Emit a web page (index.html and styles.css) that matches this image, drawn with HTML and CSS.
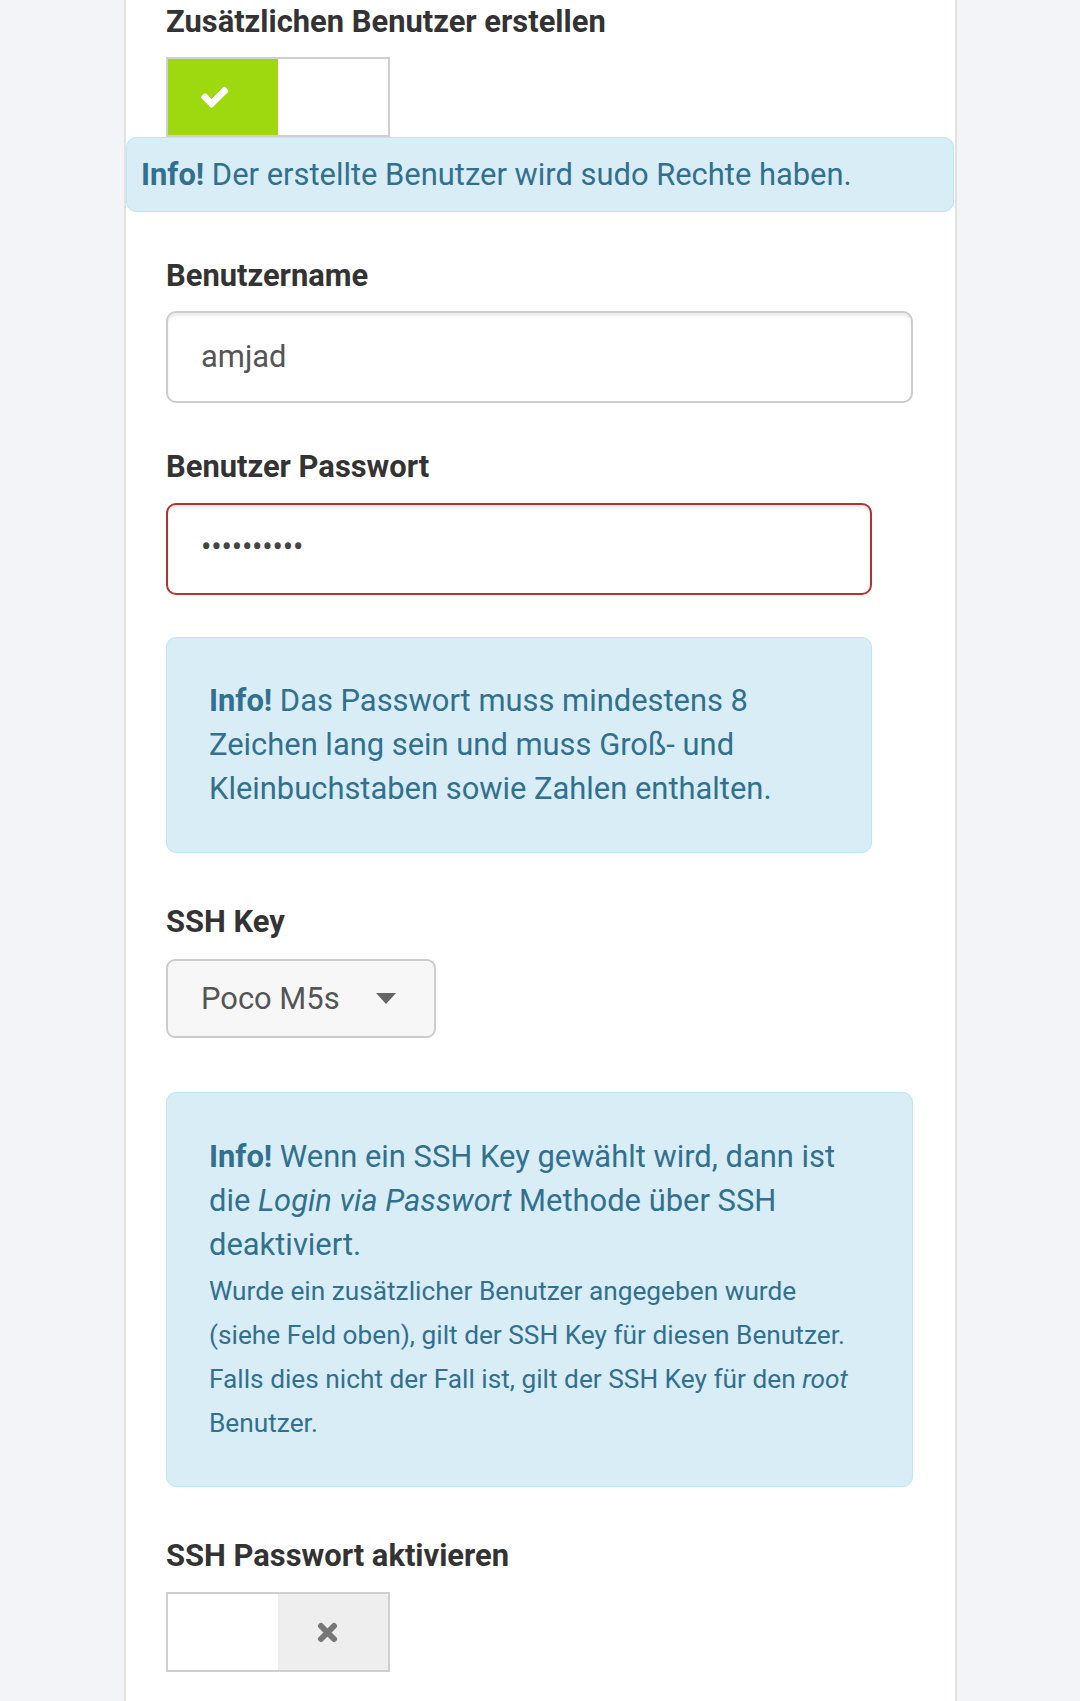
FILE: index.html
```html
<!DOCTYPE html>
<html lang="de">
<head>
<meta charset="utf-8">
<title>Benutzer</title>
<link rel="stylesheet" href="styles.css">
</head>
<body>
<div class="card">
  <div class="lbl lbl-first">Zusätzlichen Benutzer erstellen</div>
  <div class="switch switch-top">
    <div class="seg seg-on">
      <svg class="ico-check" viewBox="0 0 1792 1792" aria-hidden="true"><path fill="#fff" d="M1671 566q0 40-28 68l-724 724-136 136q-28 28-68 28t-68-28l-136-136-362-362q-28-28-28-68t28-68l136-136q28-28 68-28t68 28l294 295 656-657q28-28 68-28t68 28l136 136q28 28 28 68z"/></svg>
    </div>
    <div class="seg seg-blank"></div>
  </div>
  <div class="alert alert-wide"><strong>Info!</strong> Der erstellte Benutzer wird sudo Rechte haben.</div>

  <div class="lbl lbl-gap">Benutzername</div>
  <div class="input">amjad</div>

  <div class="lbl lbl-gap">Benutzer Passwort</div>
  <div class="input input-error input-narrow"><span class="dots">••••••••••</span></div>

  <div class="alert alert-box alert-narrow"><strong>Info!</strong> Das Passwort muss mindestens 8 Zeichen lang sein und muss Groß- und Kleinbuchstaben sowie Zahlen enthalten.</div>

  <div class="lbl lbl-gap2">SSH Key</div>
  <div class="select"><span>Poco M5s</span><span class="caret"></span></div>

  <div class="alert alert-box alert-ssh"><strong>Info!</strong> Wenn ein SSH Key gewählt wird, dann ist die <em>Login via Passwort</em> Methode über SSH deaktiviert.<br><small>Wurde ein zusätzlicher Benutzer angegeben wurde (siehe Feld oben), gilt der SSH Key für diesen Benutzer. Falls dies nicht der Fall ist, gilt der SSH Key für den <em>root</em> Benutzer.</small></div>

  <div class="lbl lbl-gap2">SSH Passwort aktivieren</div>
  <div class="switch switch-bottom">
    <div class="seg seg-blank"></div>
    <div class="seg seg-off">
      <svg class="ico-times" viewBox="0 0 21 21" aria-hidden="true"><path d="M4 4L17 17M17 4L4 17" stroke="#777" stroke-width="6" stroke-linecap="round" fill="none"/></svg>
    </div>
  </div>
</div>
</body>
</html>
```

FILE: styles.css
```css
html, body {
  margin: 0;
  padding: 0;
}
body {
  background: #f3f4f8;
  font-family: Roboto, "Liberation Sans", Arial, sans-serif;
  font-size: 30.9px;
  line-height: 1.42857;
  color: #333;
}
.card {
  margin-left: 124px;
  width: 833px;
  box-sizing: border-box;
  min-height: 1701px;
  background: #fff;
  border-left: 2px solid #e2e2e2;
  border-right: 2px solid #e2e2e2;
  padding: 0 42px 0 40px;
  overflow: hidden;
}
.lbl {
  font-weight: 700;
  color: #333;
}
.lbl-first { margin-top: 0; }
.lbl-gap { margin-top: 42px; }
.lbl-gap2 { margin-top: 47px; }

.switch {
  display: flex;
  width: 224px;
  height: 80px;
  box-sizing: border-box;
  border: 2px solid #cfcfcf;
  background: #fff;
}
.switch-top { margin-top: 13px; }
.switch-bottom { margin-top: 14px; }
.seg {
  flex: 1;
  display: flex;
  align-items: center;
  justify-content: center;
}
.seg-on { background: #9ed80e; }
.seg-blank { background: #fff; }
.seg-off { background: #eeeeee; border-top-right-radius: 3px; }
.ico-check { width: 31.5px; height: 31.5px; margin-right: 16px; }
.ico-times { width: 21px; height: 21px; margin-right: 12px; }

.alert {
  background: #d9edf7;
  border: 1px solid #bce8f1;
  color: #31708f;
  border-radius: 10px;
}
.alert strong { font-weight: 700; }
.alert-wide {
  margin: 0 -41px 0 -40px;
  padding: 15px 14px 14px;
}
.alert-box {
  padding: 42px;
}
.alert-narrow {
  width: 706px;
  box-sizing: border-box;
  margin-top: 42px;
  padding-top: 41px;
  padding-bottom: 41px;
}
.alert-ssh {
  margin-top: 54px;
  padding-right: 57px;
}
.alert small { font-size: 85%; }

.input {
  margin-top: 13px;
  height: 92px;
  box-sizing: border-box;
  border: 2px solid #cccccc;
  border-radius: 10px;
  box-shadow: inset 0 3px 3px rgba(0, 0, 0, 0.075);
  display: flex;
  align-items: center;
  padding: 0 33px;
  color: #555;
}
.input-narrow { width: 706px; }
.input-error {
  border-color: #b0352f;
}
.dots {
  letter-spacing: -0.2px;
  color: #444;
  position: relative;
  top: -1px;
}
.select {
  margin-top: 15px;
  width: 270px;
  height: 79px;
  box-sizing: border-box;
  border: 2px solid #cccccc;
  border-radius: 9px;
  background: #f7f7f7;
  display: flex;
  align-items: center;
  padding-left: 33px;
  color: #555;
}
.caret {
  margin-left: 36px;
  width: 0;
  height: 0;
  border-left: 10.5px solid transparent;
  border-right: 10.5px solid transparent;
  border-top: 11px solid #666;
}
```
